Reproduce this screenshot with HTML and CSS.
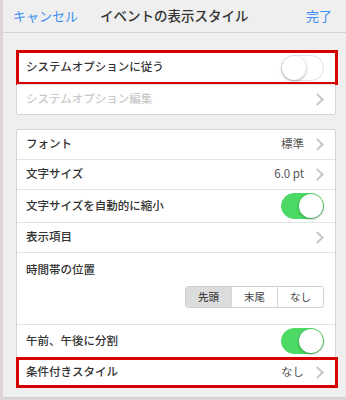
FILE: index.html
```html
<!DOCTYPE html>
<html lang="ja">
<head>
    <meta charset="UTF-8">
    <meta name="viewport" content="width=device-width, initial-scale=1.0">
    <title>イベントの表示スタイル</title>
    <link rel="stylesheet" href="styles.css">
</head>
<body>
    <div class="popover">
        <div class="header">
            <span class="link">キャンセル</span>
            <span class="title">イベントの表示スタイル</span>
            <span class="link done">完了</span>
        </div>

        <div class="card first">
            <div class="row tall marked">
                <span class="label">システムオプションに従う</span>
                <span class="toggle"></span>
            </div>
            <div class="row disabled">
                <span class="label">システムオプション編集</span>
                <span class="chevron"></span>
            </div>
        </div>

        <div class="card second">
            <div class="row">
                <span class="label">フォント</span>
                <span class="value">標準</span>
                <span class="chevron"></span>
            </div>
            <div class="row">
                <span class="label">文字サイズ</span>
                <span class="value">6.0 pt</span>
                <span class="chevron"></span>
            </div>
            <div class="row tall">
                <span class="label">文字サイズを自動的に縮小</span>
                <span class="toggle on"></span>
            </div>
            <div class="row">
                <span class="label">表示項目</span>
                <span class="chevron"></span>
            </div>
            <div class="row block">
                <span class="label">時間帯の位置</span>
                <div class="segments">
                    <span class="seg selected">先頭</span>
                    <span class="seg">末尾</span>
                    <span class="seg">なし</span>
                </div>
            </div>
            <div class="row tall">
                <span class="label">午前、午後に分割</span>
                <span class="toggle on"></span>
            </div>
            <div class="row marked">
                <span class="label">条件付きスタイル</span>
                <span class="value">なし</span>
                <span class="chevron"></span>
            </div>
        </div>
    </div>
</body>
</html>
```

FILE: styles.css
```css
body {
    margin: 0;
    padding: 0;
    width: 346px;
    height: 400px;
    overflow: hidden;
    background-color: #ddd5da;
    font-family: "Noto Sans CJK JP", "Noto Sans", sans-serif;
    color: #333;
}
.popover {
    margin-left: 3px;
    height: 397px;
    background-color: #efeff0;
    border-bottom: 1px solid #cfcfcf;
}
.header {
    height: 33px;
    border-bottom: 1px solid #d4d4d4;
    display: flex;
    align-items: center;
    padding: 0 14px 2px 10px;
    box-sizing: border-box;
    font-size: 13px;
}
.header .link {
    color: #3d8ef0;
}
.header .title {
    margin-left: 22px;
    font-size: 13.5px;
    font-weight: 500;
    color: #333;
}
.header .done {
    margin-left: auto;
}
.card {
    margin: 0 10px 0 13px;
    background-color: #fff;
    border: 1px solid #d6d6d6;
    border-radius: 2px;
}
.card.first {
    margin-top: 17px;
}
.card.second {
    margin-top: 14px;
}
.row {
    position: relative;
    height: 29px;
    display: flex;
    align-items: center;
    padding: 0 11px 0 9px;
    font-size: 11.5px;
    font-weight: 500;
    border-top: 1px solid #e3e3e3;
}
.row:first-child {
    border-top: none;
}
.row .label,
.row .value {
    margin-bottom: 3px;
}
.row.tall {
    height: 32px;
}
.card.first .row.tall {
    height: 33px;
}
.row.disabled .label {
    color: #c9c9c9;
}
.row .value {
    margin-left: auto;
    margin-right: 9px;
    color: #555;
    font-weight: 400;
}
.row .label + .chevron,
.row .label + .toggle {
    margin-left: auto;
}
.chevron {
    width: 7px;
    height: 7px;
    border-top: 2.5px solid #c6c6ca;
    border-right: 2.5px solid #c6c6ca;
    transform: rotate(45deg);
    margin-right: 2px;
}
.toggle {
    position: relative;
    width: 41px;
    height: 24px;
    border: 1px solid #e4e4e4;
    border-radius: 13px;
    background-color: #fff;
}
.toggle::after {
    content: "";
    position: absolute;
    left: 0;
    top: 0;
    width: 24px;
    height: 24px;
    border-radius: 50%;
    background-color: #fff;
    box-shadow: 0 1px 3px rgba(0, 0, 0, 0.35);
}
.toggle.on {
    background-color: #4cd964;
    border-color: #4cd964;
}
.toggle.on::after {
    left: auto;
    right: 0;
}
.row.block {
    height: 71px;
    display: block;
}
.row.block .label {
    display: block;
    margin-top: 8px;
}
.segments {
    display: flex;
    width: 137px;
    margin: 9px 0 0 auto;
    border: 1px solid #cfcfcf;
    border-radius: 3px;
    overflow: hidden;
}
.seg {
    flex: 1;
    height: 20px;
    line-height: 19px;
    text-align: center;
    font-size: 10.5px;
    font-weight: 400;
    color: #444;
    border-left: 1px solid #d6d6d6;
}
.seg:first-child {
    border-left: none;
}
.seg.selected {
    background-color: #dcdcdc;
    font-weight: 500;
}
.marked::after {
    content: "";
    position: absolute;
    left: -1px;
    right: -3px;
    top: -1px;
    bottom: -1px;
    border: 3px solid #d60000;
}
```
